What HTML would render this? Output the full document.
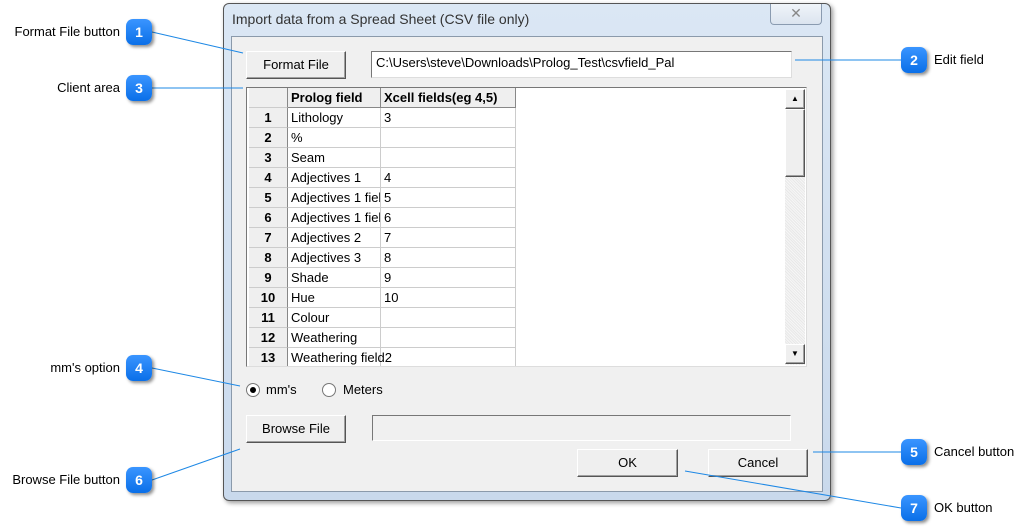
<!DOCTYPE html>
<html><head><meta charset="utf-8"><style>
*{margin:0;padding:0;box-sizing:border-box}
body{width:1030px;height:532px;background:#fff;position:relative;overflow:hidden;font-family:"Liberation Sans",Arial,sans-serif;font-size:13px;color:#000}
.a{position:absolute}
.badge{position:absolute;width:26px;height:26px;border-radius:7px;background:linear-gradient(#3a95ff,#0a6fe8);color:#fff;font-weight:bold;font-size:14px;text-align:center;line-height:26px;box-shadow:2px 2px 3px rgba(0,0,0,.45)}
.lbl{position:absolute;font-size:13px;white-space:nowrap}
.btn{position:absolute;background:#efefef;border:1px solid;border-color:#fff #555 #555 #fff;box-shadow:inset -1px -1px 0 #a0a0a0;text-align:center;font-size:13px}
.cell{position:absolute;height:20px;line-height:20px;border-right:1px solid #ccc;border-bottom:1px solid #ccc;white-space:nowrap;overflow:hidden;font-size:13px;padding-left:3px}
.rn{background:#efefef;font-weight:bold;text-align:center;padding:0;border-right:1px solid #888}
</style></head><body>
<div class="a" style="left:223px;top:3px;width:608px;height:498px;border:1px solid #555;border-radius:6px;background:linear-gradient(#dbe7f4,#c9d9ec);box-shadow:2px 2px 5px rgba(0,0,0,.4)"></div>
<div class="a" style="left:232px;top:11px;font-size:14px;color:#333">Import data from a Spread Sheet (CSV file only)</div>
<div class="a" style="left:770px;top:4px;width:52px;height:21px;border:1px solid #8a9bb0;border-top:none;border-radius:0 0 4px 4px;background:linear-gradient(#f0f4f9,#dbe4ef);text-align:center;color:#888;font-size:14px;line-height:19px">✕</div>
<div class="a" style="left:231px;top:36px;width:592px;height:456px;background:#f0f0f0;border:1px solid #8b9aab"></div>
<div class="btn" style="left:246px;top:51px;width:100px;height:28px;line-height:26px">Format File</div>
<div class="a" style="left:371px;top:51px;width:421px;height:27px;background:#fff;border:1px solid;border-color:#777 #ddd #ddd #777;padding:2px 4px;font-size:13px;line-height:18px">C:\Users\steve\Downloads\Prolog_Test\csvfield_Pal</div>
<div class="a" style="left:246px;top:87px;width:561px;height:280px;background:#fff;border:1px solid;border-color:#777 #ddd #ddd #777;overflow:hidden">
<div style="position:relative">
<div class="cell rn" style="left:2px;top:0;width:39px"></div>
<div class="cell" style="left:41px;top:0;width:93px;background:#efefef;font-weight:bold;border-right:1px solid #888;border-bottom:1px solid #888">Prolog field</div>
<div class="cell" style="left:134px;top:0;width:135px;background:#efefef;font-weight:bold;border-right:1px solid #888;border-bottom:1px solid #888">Xcell fields(eg 4,5)</div>
<div class="cell rn" style="left:2px;top:20px;width:39px">1</div><div class="cell" style="left:41px;top:20px;width:93px">Lithology</div><div class="cell" style="left:134px;top:20px;width:135px">3</div>
<div class="cell rn" style="left:2px;top:40px;width:39px">2</div><div class="cell" style="left:41px;top:40px;width:93px">%</div><div class="cell" style="left:134px;top:40px;width:135px"></div>
<div class="cell rn" style="left:2px;top:60px;width:39px">3</div><div class="cell" style="left:41px;top:60px;width:93px">Seam</div><div class="cell" style="left:134px;top:60px;width:135px"></div>
<div class="cell rn" style="left:2px;top:80px;width:39px">4</div><div class="cell" style="left:41px;top:80px;width:93px">Adjectives 1</div><div class="cell" style="left:134px;top:80px;width:135px">4</div>
<div class="cell rn" style="left:2px;top:100px;width:39px">5</div><div class="cell" style="left:41px;top:100px;width:93px">Adjectives 1 field</div><div class="cell" style="left:134px;top:100px;width:135px">5</div>
<div class="cell rn" style="left:2px;top:120px;width:39px">6</div><div class="cell" style="left:41px;top:120px;width:93px">Adjectives 1 field</div><div class="cell" style="left:134px;top:120px;width:135px">6</div>
<div class="cell rn" style="left:2px;top:140px;width:39px">7</div><div class="cell" style="left:41px;top:140px;width:93px">Adjectives 2</div><div class="cell" style="left:134px;top:140px;width:135px">7</div>
<div class="cell rn" style="left:2px;top:160px;width:39px">8</div><div class="cell" style="left:41px;top:160px;width:93px">Adjectives 3</div><div class="cell" style="left:134px;top:160px;width:135px">8</div>
<div class="cell rn" style="left:2px;top:180px;width:39px">9</div><div class="cell" style="left:41px;top:180px;width:93px">Shade</div><div class="cell" style="left:134px;top:180px;width:135px">9</div>
<div class="cell rn" style="left:2px;top:200px;width:39px">10</div><div class="cell" style="left:41px;top:200px;width:93px">Hue</div><div class="cell" style="left:134px;top:200px;width:135px">10</div>
<div class="cell rn" style="left:2px;top:220px;width:39px">11</div><div class="cell" style="left:41px;top:220px;width:93px">Colour</div><div class="cell" style="left:134px;top:220px;width:135px"></div>
<div class="cell rn" style="left:2px;top:240px;width:39px">12</div><div class="cell" style="left:41px;top:240px;width:93px">Weathering</div><div class="cell" style="left:134px;top:240px;width:135px"></div>
<div class="cell rn" style="left:2px;top:260px;width:39px">13</div><div class="cell" style="left:41px;top:260px;width:93px;overflow:visible">Weathering field2</div><div class="cell" style="left:134px;top:260px;width:135px"></div>
</div>
<div class="a" style="left:538px;top:1px;width:20px;height:276px;background:repeating-linear-gradient(45deg,#e8e8e8 0 1px,#f6f6f6 1px 2px)"></div>
<div class="btn" style="left:538px;top:1px;width:20px;height:20px;font-size:8px;line-height:18px">▲</div>
<div class="btn" style="left:538px;top:21px;width:20px;height:68px"></div>
<div class="btn" style="left:538px;top:256px;width:20px;height:20px;font-size:8px;line-height:18px">▼</div>
</div>
<div class="a" style="left:246px;top:383px;width:14px;height:14px;border-radius:50%;border:1px solid #777;background:#fff"><div style="position:absolute;left:3px;top:3px;width:6px;height:6px;border-radius:50%;background:#000"></div></div>
<div class="lbl" style="left:266px;top:382px">mm's</div>
<div class="a" style="left:322px;top:383px;width:14px;height:14px;border-radius:50%;border:1px solid #777;background:#fff"></div>
<div class="lbl" style="left:343px;top:382px">Meters</div>
<div class="btn" style="left:246px;top:415px;width:100px;height:28px;line-height:26px">Browse File</div>
<div class="a" style="left:372px;top:415px;width:419px;height:26px;border:1px solid;border-color:#777 #fff #fff #777;background:#f0f0f0"></div>
<div class="btn" style="left:577px;top:449px;width:101px;height:28px;line-height:26px">OK</div>
<div class="btn" style="left:708px;top:449px;width:100px;height:28px;line-height:26px">Cancel</div>
<svg class="a" style="left:0;top:0" width="1030" height="532"><g stroke="#1e88e5" stroke-width="1" fill="none">
<line x1="152" y1="32" x2="243" y2="53"/>
<line x1="152" y1="88" x2="243" y2="88"/>
<line x1="152" y1="368" x2="240" y2="386"/>
<line x1="152" y1="480" x2="240" y2="449"/>
<line x1="795" y1="60" x2="901" y2="60"/>
<line x1="813" y1="452" x2="901" y2="452"/>
<line x1="685" y1="471" x2="901" y2="508"/>
</g></svg>
<div class="badge" style="left:126px;top:19px">1</div>
<div class="badge" style="left:126px;top:75px">3</div>
<div class="badge" style="left:126px;top:355px">4</div>
<div class="badge" style="left:126px;top:467px">6</div>
<div class="badge" style="left:901px;top:47px">2</div>
<div class="badge" style="left:901px;top:439px">5</div>
<div class="badge" style="left:901px;top:495px">7</div>
<div class="lbl" style="right:910px;top:24px">Format File button</div>
<div class="lbl" style="right:910px;top:80px">Client area</div>
<div class="lbl" style="right:910px;top:360px">mm's option</div>
<div class="lbl" style="right:910px;top:472px">Browse File button</div>
<div class="lbl" style="left:934px;top:52px">Edit field</div>
<div class="lbl" style="left:934px;top:444px">Cancel button</div>
<div class="lbl" style="left:934px;top:500px">OK button</div>
</body></html>
